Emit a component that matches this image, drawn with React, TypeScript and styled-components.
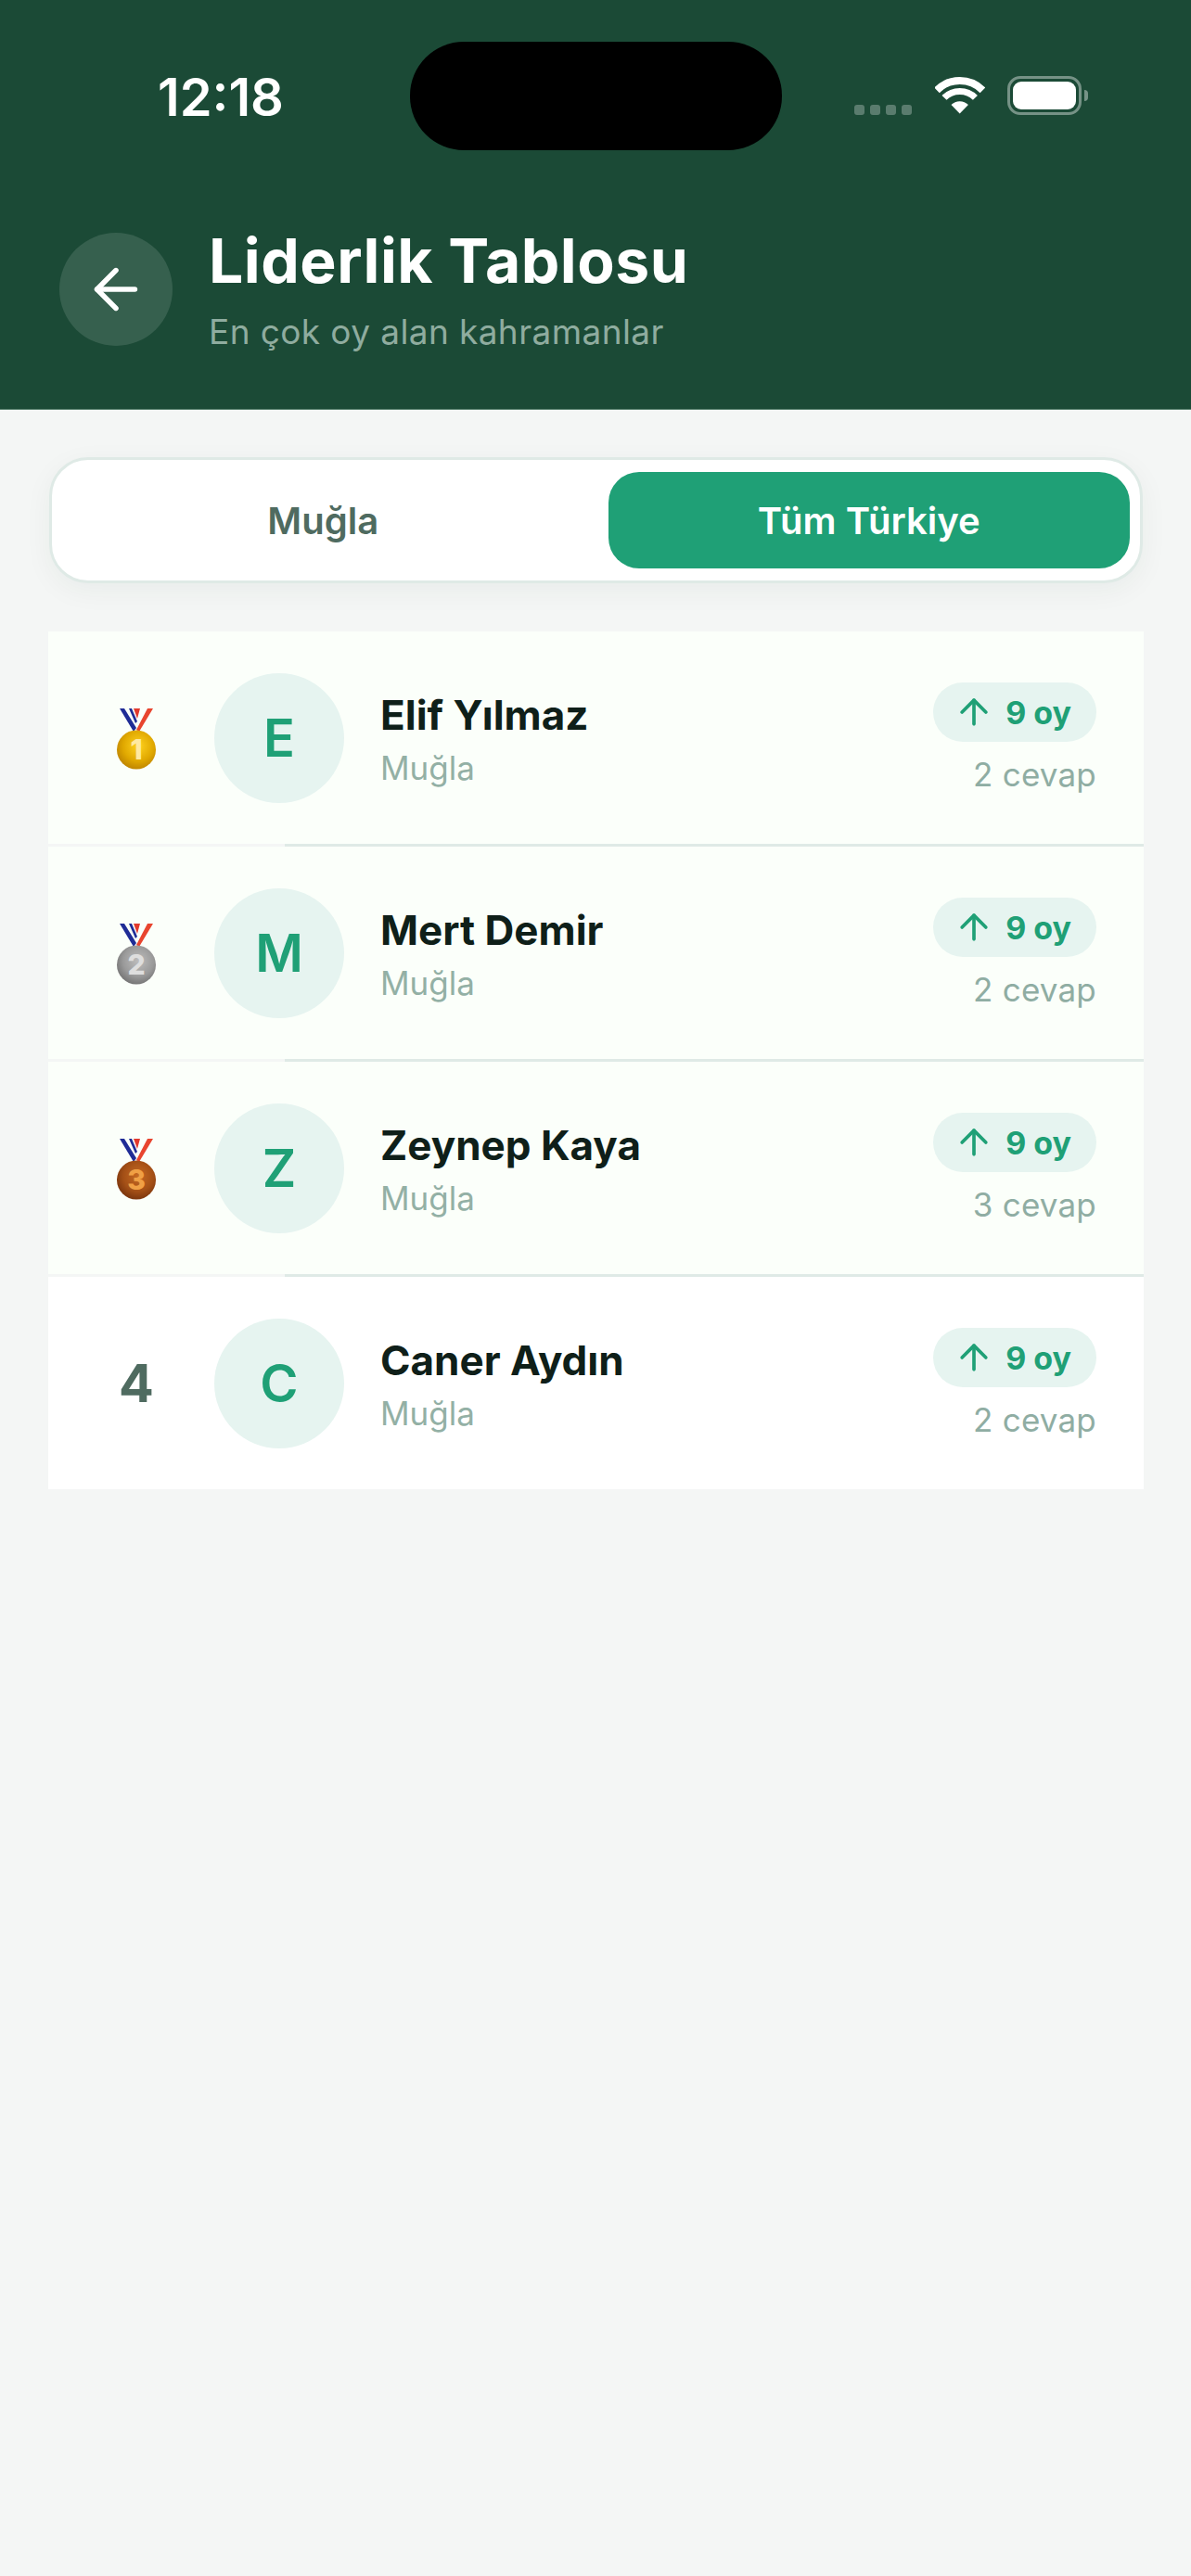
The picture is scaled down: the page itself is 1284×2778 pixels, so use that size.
// App.tsx
import { ArrowLeft, ArrowUp } from "lucide-react";
import styled, { createGlobalStyle } from "styled-components";

interface Leader {
  rank: number;
  name: string;
  city: string;
  votes: number;
  answers: number;
}

const leaders: Leader[] = [
  { rank: 1, name: "Elif Yılmaz", city: "Muğla", votes: 9, answers: 2 },
  { rank: 2, name: "Mert Demir", city: "Muğla", votes: 9, answers: 2 },
  { rank: 3, name: "Zeynep Kaya", city: "Muğla", votes: 9, answers: 3 },
  { rank: 4, name: "Caner Aydın", city: "Muğla", votes: 9, answers: 2 },
];

const medalColors: Record<number, { light: string; mid: string; dark: string; digit: string }> = {
  1: { light: "#ffd21f", mid: "#e0a800", dark: "#b97f00", digit: "#ffe9a0" },
  2: { light: "#bdbdbd", mid: "#9a9a9a", dark: "#6f6f6f", digit: "#dedede" },
  3: { light: "#c76a22", mid: "#a34f16", dark: "#74310c", digit: "#f0a045" },
};

function Medal({ rank }: { rank: number }) {
  const c = medalColors[rank];
  const id = `medal-${rank}`;
  return (
    <svg width="44" height="68" viewBox="0 -2 44 68">
      <defs>
        <radialGradient id={id} cx="55%" cy="40%" r="65%">
          <stop offset="0%" stopColor={c.light} />
          <stop offset="60%" stopColor={c.mid} />
          <stop offset="100%" stopColor={c.dark} />
        </radialGradient>
      </defs>
      <polygon points="19,0 27,0 23,14 21,14" fill="#ffffff" />
      <polygon points="4,0 9,0 22,21 19,25" fill="#1f2c96" />
      <polygon points="14,0 17,0 23,14 21,16" fill="#1f2c96" />
      <polygon points="19,0 26,0 23,11" fill="#e23a2e" />
      <polygon points="34,0 40,0 25,25 22,23" fill="#e8452f" />
      <circle cx="22" cy="44.5" r="21" fill={`url(#${id})`} />
      <text
        x="22"
        y="55"
        textAnchor="middle"
        fontFamily="Inter, sans-serif"
        fontWeight="800"
        fontSize="30"
        fill={c.digit}
      >
        {rank}
      </text>
    </svg>
  );
}

function WifiIcon() {
  return (
    <svg width="54" height="40" viewBox="0 0 54 40" fill="none">
      <path d="M2 14.3 A35 35 0 0 1 51.4 14.3" stroke="#fff" strokeWidth="8" />
      <path d="M10 22.4 A23.5 23.5 0 0 1 43.4 22.4" stroke="#fff" strokeWidth="7" />
      <path d="M26.7 39.5 L17.5 30 A13 13 0 0 1 35.9 30 Z" fill="#fff" />
    </svg>
  );
}

export default function App() {
  return (
    <>
      <GlobalStyle />
      <Page>
        <Header>
          <StatusBar>
            <Time>12:18</Time>
            <Island />
            <StatusIcons>
              <SignalDots>
                <SignalDot />
                <SignalDot />
                <SignalDot />
                <SignalDot />
              </SignalDots>
              <WifiIcon />
              <Battery>
                <BatteryFill />
              </Battery>
              <BatteryTip />
            </StatusIcons>
          </StatusBar>
          <TitleRow>
            <BackButton>
              <ArrowLeft size={70} strokeWidth={1.9} color="#ffffff" />
            </BackButton>
            <TitleBlock>
              <Title>Liderlik Tablosu</Title>
              <Subtitle>En çok oy alan kahramanlar</Subtitle>
            </TitleBlock>
          </TitleRow>
        </Header>

        <Content>
          <Tabs>
            <Tab>Muğla</Tab>
            <Tab $active>Tüm Türkiye</Tab>
          </Tabs>

          <List>
            {leaders.map((item, index) => (
              <li key={item.rank}>
                {index > 0 && <Divider />}
                <Row $top={item.rank <= 3}>
                  <Rank>{item.rank <= 3 ? <Medal rank={item.rank} /> : item.rank}</Rank>
                  <Avatar>{item.name[0]}</Avatar>
                  <Info>
                    <Name>{item.name}</Name>
                    <City>{item.city}</City>
                  </Info>
                  <Stats>
                    <VoteBadge>
                      <ArrowUp size={44} strokeWidth={2} />
                      {item.votes} oy
                    </VoteBadge>
                    <Answers>{item.answers} cevap</Answers>
                  </Stats>
                </Row>
              </li>
            ))}
          </List>
        </Content>
      </Page>
    </>
  );
}

const GlobalStyle = createGlobalStyle`
  html, body {
    margin: 0;
    padding: 0;
    background: #f4f6f5;
  }
  * {
    box-sizing: border-box;
  }
`;

const Page = styled.div`
  width: 1284px;
  min-height: 2778px;
  background: #f4f6f5;
  font-family: Inter, "Noto Sans", sans-serif;
`;

const Header = styled.header`
  height: 442px;
  background: #1b4a36;
  border-bottom: 1px solid #5d8573;
  display: flex;
  flex-direction: column;
  padding-top: 45px;
`;

const StatusBar = styled.div`
  display: flex;
  align-items: flex-start;
  height: 206px;
`;

const Time = styled.div`
  width: 442px;
  padding: 27px 0 0 170px;
  font-size: 56px;
  line-height: 66px;
  font-weight: 600;
  color: #ffffff;
`;

const Island = styled.div`
  width: 401px;
  height: 117px;
  border-radius: 58px;
  background: #000000;
`;

const StatusIcons = styled.div`
  display: flex;
  align-items: flex-start;
  padding: 38px 0 0 78px;
`;

const SignalDots = styled.div`
  display: flex;
  gap: 6.5px;
  padding-top: 30px;
  margin-right: 25px;
`;

const SignalDot = styled.span`
  width: 10.5px;
  height: 10.5px;
  border-radius: 3px;
  background: rgba(255, 255, 255, 0.28);
`;

const Battery = styled.div`
  width: 80px;
  height: 42px;
  margin: -1px 0 0 24px;
  padding: 3px;
  border: 3px solid rgba(255, 255, 255, 0.4);
  border-radius: 14px;
`;

const BatteryFill = styled.div`
  width: 100%;
  height: 100%;
  border-radius: 9px;
  background: #ffffff;
`;

const BatteryTip = styled.div`
  width: 4px;
  height: 12px;
  margin: 14px 0 0 3px;
  border-radius: 0 6px 6px 0;
  background: rgba(255, 255, 255, 0.4);
`;

const TitleRow = styled.div`
  display: flex;
  align-items: flex-start;
  gap: 39px;
  padding-left: 64px;
`;

const BackButton = styled.div`
  width: 122px;
  height: 122px;
  border-radius: 50%;
  background: rgba(255, 255, 255, 0.12);
  display: flex;
  align-items: center;
  justify-content: center;
`;

const TitleBlock = styled.div`
  display: flex;
  flex-direction: column;
  gap: 19px;
  margin-top: -5px;
`;

const Title = styled.div`
  font-size: 66px;
  line-height: 70px;
  font-weight: 700;
  letter-spacing: 0.5px;
  color: #ffffff;
`;

const Subtitle = styled.div`
  font-size: 37px;
  line-height: 46px;
  letter-spacing: 0.4px;
  color: #8fac9f;
`;

const Content = styled.main`
  padding: 51px 51px 0 52px;
`;

const Tabs = styled.div`
  height: 136px;
  margin: 0 1px;
  padding: 13px 11px;
  display: grid;
  grid-template-columns: 1fr 1fr;
  gap: 26px;
  background: #ffffff;
  border: 3px solid #dfeae6;
  border-radius: 42px;
  box-shadow: 0 8px 30px rgba(20, 60, 45, 0.05);
`;

const Tab = styled.div<{ $active?: boolean }>`
  display: flex;
  align-items: center;
  justify-content: center;
  border-radius: 33px;
  font-size: 40px;
  font-weight: 600;
  color: ${(p) => (p.$active ? "#ffffff" : "#4f6b60")};
  background: ${(p) => (p.$active ? "#1fa076" : "transparent")};
`;

const List = styled.ul`
  list-style: none;
  margin: 52px 0 0;
  padding: 0;
`;

const Divider = styled.div`
  height: 3px;
  margin-left: 255px;
  background: #dfeae6;
`;

const Row = styled.div<{ $top: boolean }>`
  height: 229px;
  display: flex;
  align-items: center;
  padding: 0 51px 0 53px;
  background: ${(p) => (p.$top ? "#fbfffa" : "#ffffff")};
`;

const Rank = styled.div`
  width: 84px;
  margin-right: 42px;
  display: flex;
  justify-content: center;
  font-size: 56px;
  font-weight: 700;
  color: #4f6b60;
`;

const Avatar = styled.div`
  width: 140px;
  height: 140px;
  margin-right: 39px;
  border-radius: 50%;
  background: #e6f4f0;
  color: #1fa076;
  display: flex;
  align-items: center;
  justify-content: center;
  font-size: 56px;
  font-weight: 600;
`;

const Info = styled.div`
  flex: 1;
  display: flex;
  flex-direction: column;
  gap: 8px;
  padding-top: 2px;
`;

const Name = styled.div`
  font-size: 44px;
  line-height: 54px;
  font-weight: 700;
  color: #0f1f19;
`;

const City = styled.div`
  font-size: 35px;
  line-height: 44px;
  color: #93b0a5;
`;

const Stats = styled.div`
  display: flex;
  flex-direction: column;
  align-items: flex-end;
  gap: 13px;
  padding-top: 2px;
`;

const VoteBadge = styled.div`
  height: 64px;
  padding: 0 27px 0 22px;
  display: flex;
  align-items: center;
  gap: 12px;
  border-radius: 32px;
  background: #e6f4f0;
  color: #1fa076;
  font-size: 34px;
  font-weight: 700;
`;

const Answers = styled.div`
  font-size: 35px;
  line-height: 44px;
  letter-spacing: 0.2px;
  color: #8fada3;
`;
